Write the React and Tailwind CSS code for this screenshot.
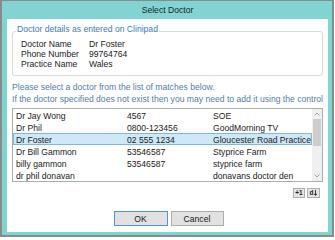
import React from "react";

const font = { fontFamily: '"Liberation Sans", Arial, sans-serif' };

const doctors = [
  { name: "Dr Jay Wong", phone: "4567", practice: "SOE" },
  { name: "Dr Phil", phone: "0800-123456", practice: "GoodMorning TV" },
  { name: "Dr Foster", phone: "02 555 1234", practice: "Gloucester Road Practice", selected: true },
  { name: "Dr Bill Gammon", phone: "53546587", practice: "Styprice Farm" },
  { name: "billy gammon", phone: "53546587", practice: "styprice farm" },
  { name: "dr phil donavan", phone: "", practice: "donavans doctor den" },
];

function Chevron({ up }) {
  return (
    <svg width="6" height="4" viewBox="0 0 6 4" className="text-[#a3a3a3]">
      <path
        d={up ? "M0.5 3.5 L3 1 L5.5 3.5" : "M0.5 0.5 L3 3 L5.5 0.5"}
        fill="none"
        stroke="currentColor"
        strokeWidth="1"
      />
    </svg>
  );
}

export default function App() {
  return (
    <div className="w-[335px] h-[240px] bg-white" style={font}>
      <div className="w-[334px] h-[237px] bg-[#8a8a8a] pt-[1px] px-[2px] pb-[2px]">
        <div className="h-full bg-[#80d4d2] flex flex-col pl-[5px] pr-[4px] pb-[3px]">
          <div className="h-[18px] flex items-center justify-center text-[8.6px] text-[#1e1e1e]">
            Select Doctor
          </div>

          <div className="flex-1 bg-white px-[5px] flex flex-col text-[8.6px] text-[#1a1a1a]">
            <fieldset className="mt-[5px] border border-[#dadada] rounded-[3px] pl-[3px] pt-[1px] pb-[6px]">
              <legend className="px-[1px] pb-[3px] leading-[11px] text-[#3a7bc8]">
                Doctor details as entered on Clinipad
              </legend>
              <div className="pl-[5px] grid grid-cols-[68px_1fr] leading-[10px]">
                <span>Doctor Name</span>
                <span>Dr Foster</span>
                <span>Phone Number</span>
                <span>99764764</span>
                <span>Practice Name</span>
                <span>Wales</span>
              </div>
            </fieldset>

            <div className="mt-[6px] leading-[11.7px] text-[#4f80b0]">
              <p className="whitespace-nowrap">Please select a doctor from the list of matches below.</p>
              <p className="whitespace-nowrap overflow-hidden">If the doctor specified does not exist then you may need to add it using the controls</p>
            </div>

            <div className="mt-[3px] h-[74px] border border-[#abadb3] flex">
              <div className="flex-1 flex flex-col">
                {doctors.map((d) => (
                  <div
                    key={d.name}
                    className={
                      "h-[12px] grid grid-cols-[111px_86px_1fr] items-center pl-[2px] leading-[12px] border " +
                      (d.selected ? "bg-[#cde8f7] border-[#7db7e3]" : "border-transparent")
                    }
                  >
                    <span>{d.name}</span>
                    <span>{d.phone}</span>
                    <span className="whitespace-nowrap">{d.practice}</span>
                  </div>
                ))}
              </div>
              <div className="w-[10px] bg-[#f0f0f0] flex flex-col">
                <div className="h-[10px] flex items-center justify-center">
                  <Chevron up />
                </div>
                <div className="flex-1 px-[1px]">
                  <div className="h-[27px] bg-[#cdcdcd]" />
                </div>
                <div className="h-[10px] flex items-center justify-center">
                  <Chevron />
                </div>
              </div>
            </div>

            <div className="mt-[6px] flex justify-end gap-[2px] pr-[3px]">
              <button className="w-[12px] h-[10px] border border-[#adadad] bg-[#e4e4e4] flex items-center justify-center text-[6.5px] font-bold leading-none text-[#222]">
                +1
              </button>
              <button className="w-[13px] h-[10px] border border-[#adadad] bg-[#e4e4e4] flex items-center justify-center gap-[1px] text-[6.5px] font-bold leading-none text-[#222]">
                <span>d</span>
                <svg width="3" height="6" viewBox="0 0 3 6">
                  <path d="M1.5 0 V5 M0 3.5 L1.5 5.5 L3 3.5" fill="none" stroke="#222" strokeWidth="0.9" />
                </svg>
              </button>
            </div>

            <div className="mt-[13px] flex justify-center gap-[3px] pl-[2px]">
              <button className="w-[54px] h-[15px] border border-[#4a96d8] bg-[#e1e1e1] flex items-center justify-center leading-none">
                OK
              </button>
              <button className="w-[53px] h-[15px] border border-[#adadad] bg-[#e1e1e1] flex items-center justify-center leading-none">
                Cancel
              </button>
            </div>
          </div>
        </div>
      </div>
    </div>
  );
}
